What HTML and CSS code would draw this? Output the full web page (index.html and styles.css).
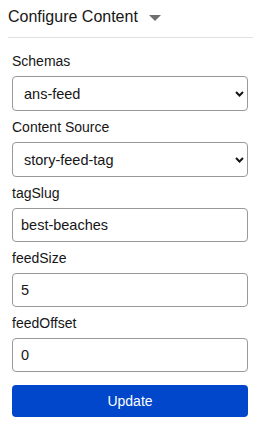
FILE: index.html
```html
<!DOCTYPE html>
<html lang="en">
<head>
    <meta charset="UTF-8">
    <meta name="viewport" content="width=device-width, initial-scale=1.0">
    <title>Configure Content</title>
    <link rel="stylesheet" href="styles.css">
</head>
<body>

    <div class="panel">
        <div class="panel-header">
            <span>Configure Content</span>
            <svg class="caret" width="12" height="6" viewBox="0 0 12 6"><polygon points="0,0 12,0 6,6" fill="#6f6f6f"/></svg>
        </div>

        <form class="config-form" onsubmit="return false">
            <div class="field">
                <label for="schemas">Schemas</label>
                <div class="select-wrap">
                    <select id="schemas">
                        <option>ans-feed</option>
                    </select>
                    <svg class="chevron" width="9" height="6" viewBox="0 0 9 6"><polyline points="1,1 4.5,4.5 8,1" fill="none" stroke="#161616" stroke-width="2"/></svg>
                </div>
            </div>
            <div class="field">
                <label for="source">Content Source</label>
                <div class="select-wrap">
                    <select id="source">
                        <option>story-feed-tag</option>
                    </select>
                    <svg class="chevron" width="9" height="6" viewBox="0 0 9 6"><polyline points="1,1 4.5,4.5 8,1" fill="none" stroke="#161616" stroke-width="2"/></svg>
                </div>
            </div>
            <div class="field">
                <label for="tagSlug">tagSlug</label>
                <input type="text" id="tagSlug" value="best-beaches">
            </div>
            <div class="field">
                <label for="feedSize">feedSize</label>
                <input type="text" id="feedSize" value="5">
            </div>
            <div class="field">
                <label for="feedOffset">feedOffset</label>
                <input type="text" id="feedOffset" value="0">
            </div>
            <button type="submit" class="update-btn">Update</button>
        </form>
    </div>

</body>
</html>
```

FILE: styles.css
```css
body {
    font-family: "Liberation Sans", Arial, sans-serif;
    margin: 0;
    padding: 0;
    background-color: #fff;
    color: #161616;
}
.panel {
    margin: 0 4px 0 8px;
}
.panel-header {
    display: flex;
    align-items: center;
    font-size: 16px;
    line-height: 20px;
    padding: 7px 0 10px;
    border-bottom: 1px solid #e0e0e0;
}
.caret {
    margin-left: 11px;
    margin-top: 1px;
}
.config-form {
    display: flex;
    flex-direction: column;
    gap: 7px;
    padding: 14px 5px 0 4px;
}
.field {
    display: flex;
    flex-direction: column;
}
.field label {
    font-size: 14px;
    line-height: 18px;
    margin-bottom: 6px;
}
.select-wrap {
    position: relative;
}
select {
    appearance: none;
    -webkit-appearance: none;
    width: 100%;
    height: 35px;
    padding: 0 24px 0 11px;
    font-family: inherit;
    font-size: 14.5px;
    color: #161616;
    background-color: #fff;
    border: 1px solid #999;
    border-radius: 4px;
}
.chevron {
    position: absolute;
    right: 4px;
    top: 15px;
    pointer-events: none;
}
input[type="text"] {
    box-sizing: border-box;
    width: 100%;
    height: 34px;
    padding: 0 8px;
    font-family: inherit;
    font-size: 14.5px;
    color: #161616;
    border: 1px solid #999;
    border-radius: 4px;
}
.update-btn {
    margin-top: 6px;
    height: 32px;
    background-color: #0047cc;
    color: white;
    border: none;
    border-radius: 4px;
    font-family: inherit;
    font-size: 14px;
    cursor: pointer;
}
```
